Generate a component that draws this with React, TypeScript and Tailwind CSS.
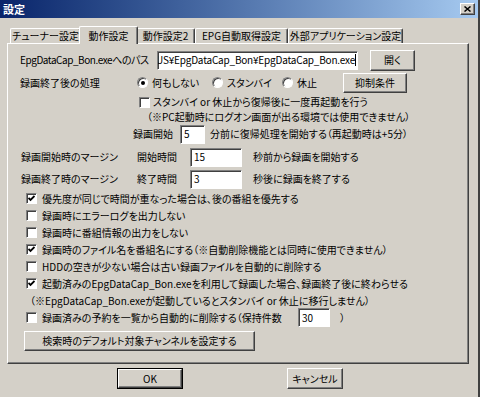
import { FC, ReactNode } from 'react';

const raised =
  'bg-[#d4d0c8] border border-t-white border-l-white border-r-[#404040] border-b-[#404040] shadow-[inset_-1px_-1px_#808080]';
const sunken =
  'bg-white border border-t-[#808080] border-l-[#808080] border-r-white border-b-white shadow-[inset_1px_1px_#404040]';

const Button: FC<{ className?: string; children: ReactNode }> = ({ className = '', children }) => (
  <div className={`${raised} flex items-center justify-center text-[10px] leading-none ${className}`}>
    {children}
  </div>
);

const TextBox: FC<{ className?: string; value: string; alignEnd?: boolean }> = ({
  className = '',
  value,
  alignEnd,
}) => (
  <div
    className={`${sunken} h-[19px] flex items-center overflow-hidden whitespace-nowrap text-[10px] leading-none ${
      alignEnd ? 'justify-end pr-[1px] tracking-[-0.2px]' : 'pl-[3px]'
    } ${className}`}
  >
    <span className="shrink-0">{value}</span>
    {alignEnd && <span className="w-px h-[12px] bg-black shrink-0" />}
  </div>
);

const Check: FC<{ checked?: boolean }> = ({ checked }) => (
  <div className={`${sunken} w-[11px] h-[11px] shrink-0 flex items-center justify-center`}>
    {checked && (
      <svg width="7" height="7" viewBox="0 0 7 7">
        <path d="M0.5 3 L2.5 5 L6.5 1" stroke="black" strokeWidth="1.8" fill="none" />
      </svg>
    )}
  </div>
);

const Radio: FC<{ checked?: boolean }> = ({ checked }) => (
  <div className="w-[11px] h-[11px] shrink-0 rounded-full bg-white border border-t-[#808080] border-l-[#808080] border-r-white border-b-white shadow-[inset_1px_1px_#404040] flex items-center justify-center">
    {checked && <div className="w-[4px] h-[4px] rounded-full bg-black" />}
  </div>
);

const CheckRow: FC<{ checked?: boolean; children: ReactNode }> = ({ checked, children }) => (
  <div className="h-[17px] flex items-center pl-[18px]">
    <Check checked={checked} />
    <span className="ml-[5px] whitespace-nowrap">{children}</span>
  </div>
);

const Tab: FC<{ label: string; active?: boolean; className?: string }> = ({ label, active, className = '' }) => (
  <div
    className={`flex items-center justify-center whitespace-nowrap text-[10px] leading-none border-t border-l border-t-white border-l-white border-r border-r-[#404040] shadow-[inset_-1px_0_#808080] rounded-t-[2px] ${
      active ? 'h-[18px] -mx-[2px] z-10 bg-[#d4d0c8] relative -mb-px' : 'h-[15px]'
    } ${className}`}
  >
    {label}
  </div>
);

export default function App() {
  return (
    <div className="w-[480px] h-[397px] overflow-hidden bg-[#d4d0c8] text-black font-['Noto_Sans_CJK_JP',sans-serif] [font-feature-settings:'palt'] text-[10px] leading-none border-r-2 border-r-[#404040] flex flex-col">
      {/* title bar */}
      <div className="h-[18px] shrink-0 flex items-center justify-between bg-gradient-to-r from-[#0a246a] to-[#a6caf0] pl-[3px] pr-[3px]">
        <span className="text-white font-bold text-[11px]">設定</span>
        <div className={`${raised} w-[15px] h-[12px] flex items-center justify-center`}>
          <svg width="7" height="6" viewBox="0 0 7 6">
            <path d="M0.5 0.5 L6.5 5.5 M6.5 0.5 L0.5 5.5" stroke="black" strokeWidth="1.5" />
          </svg>
        </div>
      </div>

      {/* tabs */}
      <div className="flex items-end h-[25px] shrink-0 pl-[10px]">
        <Tab label="チューナー設定" className="w-[71px]" />
        <Tab label="動作設定" active className="w-[59px]" />
        <Tab label="動作設定2" className="w-[59px]" />
        <Tab label="EPG自動取得設定" className="w-[93px]" />
        <Tab label="外部アプリケーション設定" className="w-[115px]" />
      </div>

      {/* panel */}
      <div className="ml-[7px] w-[462px] h-[321px] shrink-0 border border-t-white border-l-white border-r-[#404040] border-b-[#404040] shadow-[inset_-1px_-1px_#808080] pt-[5px] flex flex-col">
        <div className="h-[22px] flex items-center pl-[12px]">
          <span className="w-[137px] shrink-0 whitespace-nowrap tracking-[-0.45px]">EpgDataCap_Bon.exeへのパス</span>
          <TextBox className="w-[201px]" value="US¥EpgDataCap_Bon¥EpgDataCap_Bon.exe" alignEnd />
          <Button className="ml-[12px] w-[45px] h-[21px]">開く</Button>
        </div>

        <div className="h-[21px] mt-[1px] flex items-center pl-[12px]">
          <span className="w-[117px]">録画終了後の処理</span>
          <div className="w-[75px] flex items-center">
            <Radio checked />
            <span className="ml-[4px]">何もしない</span>
          </div>
          <div className="w-[70px] flex items-center">
            <Radio />
            <span className="ml-[4px]">スタンバイ</span>
          </div>
          <div className="w-[61px] flex items-center">
            <Radio />
            <span className="ml-[4px]">休止</span>
          </div>
          <Button className="w-[64px] h-[20px]">抑制条件</Button>
        </div>

        <div className="h-[16px] mt-[1px] flex items-center pl-[131px]">
          <Check />
          <span className="ml-[3px] whitespace-nowrap">スタンバイ or 休止から復帰後に一度再起動を行う</span>
        </div>
        <div className="h-[13px] flex items-center pl-[139px] whitespace-nowrap">
          （※PC起動時にログオン画面が出る環境では使用できません）
        </div>

        <div className="h-[20px] mt-[1px] flex items-center pl-[125px] whitespace-nowrap">
          <span className="w-[47px]">録画開始</span>
          <TextBox className="w-[25px]" value="5" />
          <span className="ml-[5px]">分前に復帰処理を開始する（再起動時は+5分）</span>
        </div>

        <div className="h-[20px] mt-[3px] flex items-center pl-[13px] whitespace-nowrap">
          <span className="w-[116px]">録画開始時のマージン</span>
          <span className="w-[53px]">開始時間</span>
          <TextBox className="w-[52px]" value="15" />
          <span className="ml-[11px]">秒前から録画を開始する</span>
        </div>
        <div className="h-[20px] mt-[2px] flex items-center pl-[13px] whitespace-nowrap">
          <span className="w-[116px]">録画終了時のマージン</span>
          <span className="w-[53px]">終了時間</span>
          <TextBox className="w-[52px]" value="3" />
          <span className="ml-[11px]">秒後に録画を終了する</span>
        </div>

        <div className="mt-[1px] flex flex-col">
          <CheckRow checked>優先度が同じで時間が重なった場合は、後の番組を優先する</CheckRow>
          <CheckRow>録画時にエラーログを出力しない</CheckRow>
          <CheckRow>録画時に番組情報の出力をしない</CheckRow>
          <CheckRow checked>録画時のファイル名を番組名にする（※自動削除機能とは同時に使用できません）</CheckRow>
          <CheckRow>HDDの空きが少ない場合は古い録画ファイルを自動的に削除する</CheckRow>
          <CheckRow checked>起動済みのEpgDataCap_Bon.exeを利用して録画した場合、録画終了後に終わらせる</CheckRow>
          <div className="h-[17px] flex items-center pl-[22px] whitespace-nowrap">
            （※EpgDataCap_Bon.exeが起動しているとスタンバイ or 休止に移行しません）
          </div>
          <div className="h-[17px] flex items-center pl-[18px] whitespace-nowrap">
            <Check />
            <span className="ml-[5px] w-[256px]">録画済みの予約を一覧から自動的に削除する（保持件数</span>
            <TextBox className="w-[32px]" value="30" />
            <span className="ml-[10px]">）</span>
          </div>
        </div>

        <Button className="ml-[16px] mt-[5px] w-[231px] h-[20px]">検索時のデフォルト対象チャンネルを設定する</Button>
      </div>

      {/* bottom buttons */}
      <div className="mt-[4px] h-[21px] flex items-center">
        <div className="ml-[117px] w-[66px] h-[21px] border border-black">
          <Button className="w-full h-full">OK</Button>
        </div>
        <Button className="ml-[104px] w-[56px] h-[21px]">キャンセル</Button>
      </div>
    </div>
  );
}
